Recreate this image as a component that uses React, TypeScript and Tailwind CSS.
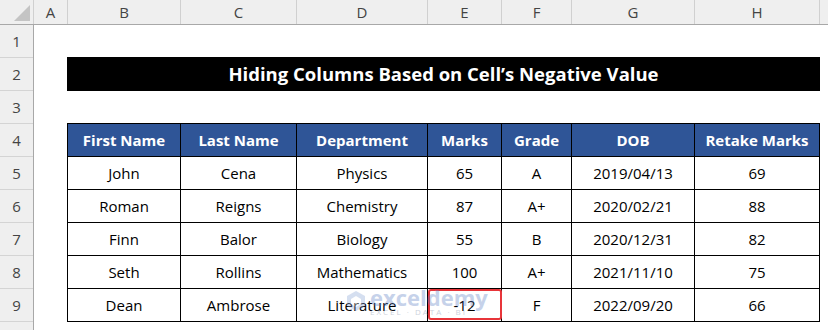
const cols = [
  { letter: "B", w: "w-[113px]" },
  { letter: "C", w: "w-[116px]" },
  { letter: "D", w: "w-[131px]" },
  { letter: "E", w: "w-[74px]" },
  { letter: "F", w: "w-[70px]" },
  { letter: "G", w: "w-[123px]" },
  { letter: "H", w: "w-[125px]" },
];

const headers = ["First Name", "Last Name", "Department", "Marks", "Grade", "DOB", "Retake Marks"];

const rows = [
  ["John", "Cena", "Physics", "65", "A", "2019/04/13", "69"],
  ["Roman", "Reigns", "Chemistry", "87", "A+", "2020/02/21", "88"],
  ["Finn", "Balor", "Biology", "55", "B", "2020/12/31", "82"],
  ["Seth", "Rollins", "Mathematics", "100", "A+", "2021/11/10", "75"],
  ["Dean", "Ambrose", "Literature", "-12", "F", "2022/09/20", "66"],
];

function Watermark() {
  return (
    <div className="pointer-events-none absolute left-[346px] top-[286px] flex items-center gap-1 opacity-35">
      <svg width="20" height="22" viewBox="0 0 20 22">
        <path d="M10 1 L19 6 L19 16 L10 21 L1 16 L1 6 Z" fill="#8aa4d6" />
        <path d="M10 6 L15 9 L15 14 L10 17 L5 14 L5 9 Z" fill="#ffffff" />
      </svg>
      <div className="flex flex-col leading-none">
        <span className="text-[22px] font-bold text-[#5d7fc4]">exceldemy</span>
        <span className="text-[8px] tracking-[2px] text-[#6b7a99]">EXCEL · DATA · BI</span>
      </div>
    </div>
  );
}

export default function App() {
  return (
    <div className="relative h-[330px] w-[828px] overflow-hidden bg-white font-['Open_Sans',sans-serif] text-black">
      {/* column headers */}
      <div className="flex h-[25px] border-b border-[#a8a8a8] bg-[#efefef] text-[15px] text-[#444]">
        <div className="relative w-[34px] shrink-0 border-r border-[#d0d0d0]">
          <svg className="absolute left-[14px] top-[5px]" width="16" height="16" viewBox="0 0 16 16">
            <polygon points="16,0 16,16 0,16" fill="#c4c4c4" />
          </svg>
        </div>
        <div className="flex w-[34px] shrink-0 items-center justify-center border-r border-[#d0d0d0]">A</div>
        {cols.map((c) => (
          <div key={c.letter} className={`${c.w} flex shrink-0 items-center justify-center border-r border-[#d0d0d0]`}>
            {c.letter}
          </div>
        ))}
        <div className="flex-1" />
      </div>

      <div className="flex">
        {/* row headers */}
        <div className="w-[34px] shrink-0 border-r border-[#a8a8a8] bg-[#efefef] text-[15px] text-[#444]">
          {[1, 2, 3, 4, 5, 6, 7, 8, 9, 10].map((n) => (
            <div key={n} className="flex h-[33px] items-center justify-center border-b border-[#d4d4d4]">
              {n}
            </div>
          ))}
        </div>

        <div className="w-[33px] shrink-0" />

        <div className="w-[753px] shrink-0">
          <div className="h-[32px]" />
          <div className="flex h-[34px] items-center justify-center bg-black text-[18.5px] font-bold text-white">
            Hiding Columns Based on Cell’s Negative Value
          </div>
          <div className="h-[32px]" />

          <div className="border-l border-t border-black text-[15px]">
            <div className="flex h-[33px] bg-[#2f5597] font-bold text-white">
              {headers.map((h, i) => (
                <div key={h} className={`${cols[i].w} flex shrink-0 items-center justify-center border-b border-r border-black`}>
                  {h}
                </div>
              ))}
            </div>
            {rows.map((r, ri) => (
              <div key={ri} className="flex h-[33px]">
                {r.map((v, i) => (
                  <div
                    key={i}
                    className={`${cols[i].w} relative flex shrink-0 items-center justify-center border-b border-r border-black`}
                  >
                    {v}
                    {ri === 4 && i === 3 && (
                      <div className="absolute left-0 right-[-1px] top-0 bottom-[1px] rounded-[3px] border-2 border-[#e8353a]" />
                    )}
                  </div>
                ))}
              </div>
            ))}
          </div>
        </div>
      </div>

      <Watermark />
    </div>
  );
}
